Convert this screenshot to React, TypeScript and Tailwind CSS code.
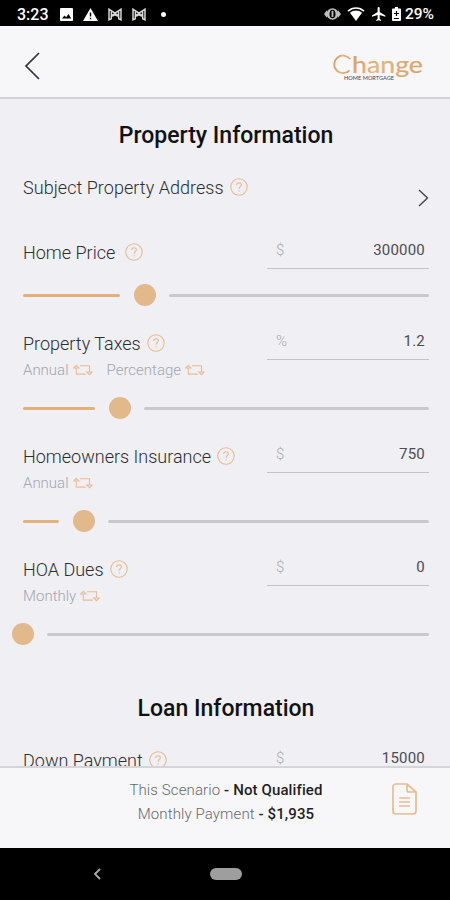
import { clsx } from 'clsx';

type Field = {
  label: string;
  unit: string;
  value: string;
  position?: number;
  periods?: string[];
  wide?: boolean;
};

const propertyFields: Field[] = [
  { label: 'Home Price', unit: '$', value: '300000', position: 122, wide: true },
  { label: 'Property Taxes', unit: '%', value: '1.2', position: 97, periods: ['Annual', 'Percentage'] },
  { label: 'Homeowners Insurance', unit: '$', value: '750', position: 61, periods: ['Annual'] },
  { label: 'HOA Dues', unit: '$', value: '0', position: 0, periods: ['Monthly'] },
];

const HelpIcon = () => (
  <svg width="18" height="18" viewBox="0 0 18 18" fill="none" stroke="#e6bd90" strokeWidth="1.1" className="shrink-0">
    <circle cx="9" cy="9" r="8.2" />
    <path d="M6.6 7.1c0-1.5 1-2.4 2.4-2.4s2.4.9 2.4 2.1c0 1.7-2.3 1.8-2.3 3.9M9.1 12.2v1.2" />
  </svg>
);

const SwapIcon = () => (
  <svg width="20" height="12" viewBox="0 0 20 12" fill="none" stroke="#e6bf96" strokeWidth="1.1">
    <path d="M.7 4 3.3 1.3 6 4zM3.3 4v6.1h9.5M7 1.7h9.5V8M13.8 8l2.7 2.7L19.2 8z" />
  </svg>
);

const Slider = ({ position }: { position: number }) => {
  const filled = Math.max(0, position - 25);
  return (
    <div className="flex h-[22px] items-center">
      <div className="h-[3px] shrink-0 rounded-full bg-[#e3b27c]" style={{ width: filled }} />
      <div
        className="flex w-[49px] shrink-0 justify-center"
        style={{ marginLeft: position < 25 ? position - 25 : 0 }}
      >
        <div className="size-[22px] rounded-full bg-[#e2b98b]" />
      </div>
      <div className="h-[3px] flex-1 rounded-full bg-[#c9c9cd]" />
    </div>
  );
};

const FieldRow = ({ label, unit, value, position, periods, wide }: Field) => (
  <div className="pb-[18px]">
    <div className={clsx('flex justify-between', periods ? 'h-[73px]' : 'h-[51px]')}>
      <div className="pt-[7px]">
        <div className={clsx('flex h-6 items-center', wide ? 'gap-[10px]' : 'gap-[6px]')}>
          <span className="whitespace-nowrap text-[18px] font-[350] text-[#2d2d32]">{label}</span>
          <HelpIcon />
        </div>
        {periods && (
          <div className="mt-[5px] flex h-5 gap-[14px]">
            {periods.map((period) => (
              <span key={period} className="flex items-center gap-1 text-[15px] font-light text-[#a3a7ae]">
                {period}
                <SwapIcon />
              </span>
            ))}
          </div>
        )}
      </div>
      <div className="flex h-9 w-[162px] items-center justify-between border-b border-[#c3c3c8] pl-[9px] pr-1 text-[15px]">
        <span className="w-2 text-center font-light text-[#aaaab0]">{unit}</span>
        <span className="tracking-[0.2px] text-[#4c4c52]">{value}</span>
      </div>
    </div>
    {position !== undefined && <Slider position={position} />}
  </div>
);

const NotificationIcon = () => (
  <svg width="14" height="13" viewBox="0 0 14 13" fill="none" stroke="#d8d8d8" strokeWidth="1.5">
    <path d="M1 1.2v10.6l2.3-1V8l3.7-2.5L10.7 8v2.8l2.3 1V1.2L7 5.2zM3.4 3.5v4.8L7 6.7l3.6 1.6V3.5" />
  </svg>
);

const StatusBar = () => (
  <div className="flex h-[26px] items-center bg-black pl-[17px] pr-4 pt-[2px] text-white">
    <span className="w-[43px] pt-px text-[16px] font-medium leading-none">3:23</span>
    <svg width="13" height="13" viewBox="0 0 13 13">
      <rect width="13" height="13" rx="1" fill="#fff" />
      <path d="m2 10.5 2.5-3 1.7 1.8L8.5 6l2.7 4.5z" fill="#000" />
    </svg>
    <svg width="15" height="13" viewBox="0 0 15 13" className="ml-[10px]">
      <path d="M7.5 0 15 13H0z" fill="#fff" />
      <path d="M7.5 4.5v4M7.5 9.8v1.5" stroke="#000" strokeWidth="1.4" />
    </svg>
    <div className="ml-[10px] flex gap-[10px]">
      <NotificationIcon />
      <NotificationIcon />
    </div>
    <span className="ml-[15px] size-[5px] rounded-full bg-white" />
    <div className="ml-auto flex items-center">
      <svg width="17" height="12" viewBox="0 0 17 12" fill="#bdbdbd">
        <path d="M0 6 3 2v8zM17 6l-3-4v8z" />
        <ellipse cx="8.5" cy="6" rx="6" ry="5.8" />
        <ellipse cx="8.5" cy="6" rx="3" ry="4.3" fill="#000" />
        <rect x="7.6" y="3" width="1.8" height="6" />
      </svg>
      <svg width="18" height="14" viewBox="0 0 18 14" className="ml-[6px]">
        <path d="M1 4.2C5.5-.1 12.5-.1 17 4.2" stroke="#fff" strokeWidth="1.7" fill="none" />
        <path d="M3 5.7C6.5 2.7 11.5 2.7 15 5.7L9 14z" fill="#fff" />
      </svg>
      <svg width="14" height="14" viewBox="2 2 20 20" fill="#fff" className="ml-[7px]">
        <path d="M21 16v-2l-8-5V3.5a1.5 1.5 0 0 0-3 0V9l-8 5v2l8-2.5V19l-2 1.5V22l3.5-1 3.5 1v-1.5L13 19v-5.5z" />
      </svg>
      <svg width="9" height="14" viewBox="0 0 9 14" className="ml-[6px]">
        <path d="M1 1.5h2V0h3v1.5h2a1 1 0 0 1 1 1V13a1 1 0 0 1-1 1H1a1 1 0 0 1-1-1V2.5a1 1 0 0 1 1-1z" fill="#fff" />
        <path d="M4.5 4v5M2 6.5h5M2 11.5h5" stroke="#000" strokeWidth="1.2" />
      </svg>
      <span className="ml-1 pt-px text-[15.5px] font-medium leading-none">29%</span>
    </div>
  </div>
);

const Logo = () => (
  <svg width="92" height="30" viewBox="0 0 92 30" className="overflow-visible">
    <defs>
      <linearGradient id="gold" x1="0" y1="0" x2="1" y2="0.3">
        <stop offset="0" stopColor="#d39a5b" />
        <stop offset="0.5" stopColor="#e3b67f" />
        <stop offset="1" stopColor="#d9a56b" />
      </linearGradient>
    </defs>
    <path d="M18 7A8.800 8.800 0 1 0 17.500 18.300" fill="none" stroke="url(#gold)" strokeWidth="1.900" />
    <text
      x="20"
      y="20.5"
      fontSize="23"
      textLength="71"
      lengthAdjust="spacingAndGlyphs"
      fill="url(#gold)"
      stroke="url(#gold)"
      strokeWidth="0.2"
      fontFamily="Lato, sans-serif"
    >
      hange
    </text>
    <text x="12" y="28" fontSize="5.5" textLength="50" lengthAdjust="spacingAndGlyphs" fill="#44444a" fontFamily="Lato, sans-serif">
      HOME MORTGAGE
    </text>
  </svg>
);

const Header = () => (
  <header className="flex h-[73px] items-center justify-between border-b-2 border-[#d2d2d7] bg-[#f7f7f9] pl-6 pr-[26px]">
    <svg width="16" height="28" viewBox="0 0 16 28" fill="none" stroke="#333338" strokeWidth="1.7" className="mt-[8px]">
      <path d="M15 1 2 14l13 13" />
    </svg>
    <div className="mt-[11px]">
      <Logo />
    </div>
  </header>
);

const Footer = () => (
  <footer className="flex h-[82px] shrink-0 items-start justify-between border-t-2 border-[#d5d5d9] bg-[#f7f7f9] px-[33px] pt-[10px]">
    <div className="w-[27px]" />
    <div className="text-center text-[15px] leading-6 tracking-[0.12px] text-[#1f1f22]">
      <p>
        <span className="font-light text-[#68686d]">This Scenario </span>
        <span className="font-medium">- Not Qualified</span>
      </p>
      <p>
        <span className="font-light text-[#68686d]">Monthly Payment </span>
        <span className="font-medium">- $1,935</span>
      </p>
    </div>
    <svg width="25" height="32" viewBox="0 0 25 32" fill="none" stroke="#e6bd90" strokeWidth="1.7" className="mt-[5px]">
      <path d="M15 1H4a3 3 0 0 0-3 3v24a3 3 0 0 0 3 3h17a3 3 0 0 0 3-3V9zM15 1v6a2 2 0 0 0 2 2h7M7 15h11M7 19h11M7 23h11" />
    </svg>
  </footer>
);

export default function App() {
  return (
    <div className="flex h-[900px] w-[450px] flex-col overflow-hidden bg-[#efeff4] font-[Roboto,sans-serif]">
      <StatusBar />
      <Header />
      <main className="h-[667px] shrink-0 overflow-hidden pl-[23px] pr-[21px]">
        <h2 className="pt-[21px] text-center text-[23px] font-medium leading-8 text-[#111113]">Property Information</h2>
        <div className="flex h-[81px] justify-between pt-[23px]">
          <div className="flex h-6 items-center gap-[6px]">
            <span className="whitespace-nowrap text-[18px] font-[350] tracking-[0.04px] text-[#2d2d32]">Subject Property Address</span>
            <HelpIcon />
          </div>
          <svg width="11" height="18" viewBox="0 0 11 18" fill="none" stroke="#444449" strokeWidth="1.4" className="mt-[14px]">
            <path d="m1 1 8.5 8L1 17" />
          </svg>
        </div>
        {propertyFields.map((field) => (
          <FieldRow key={field.label} {...field} />
        ))}
        <h2 className="mb-4 mt-[30px] text-center text-[23px] font-medium leading-8 text-[#111113]">Loan Information</h2>
        <FieldRow label="Down Payment" unit="$" value="15000" />
      </main>
      <Footer />
      <nav className="flex h-[52px] items-center bg-black">
        <svg width="8" height="12" viewBox="0 0 8 12" fill="none" stroke="#aaaaaa" strokeWidth="1.8" className="ml-[93px]">
          <path d="M7 1 2 6l5 5" />
        </svg>
        <span className="ml-[109px] h-3 w-[32px] rounded-full bg-[#9e9e9e]" />
      </nav>
    </div>
  );
}
